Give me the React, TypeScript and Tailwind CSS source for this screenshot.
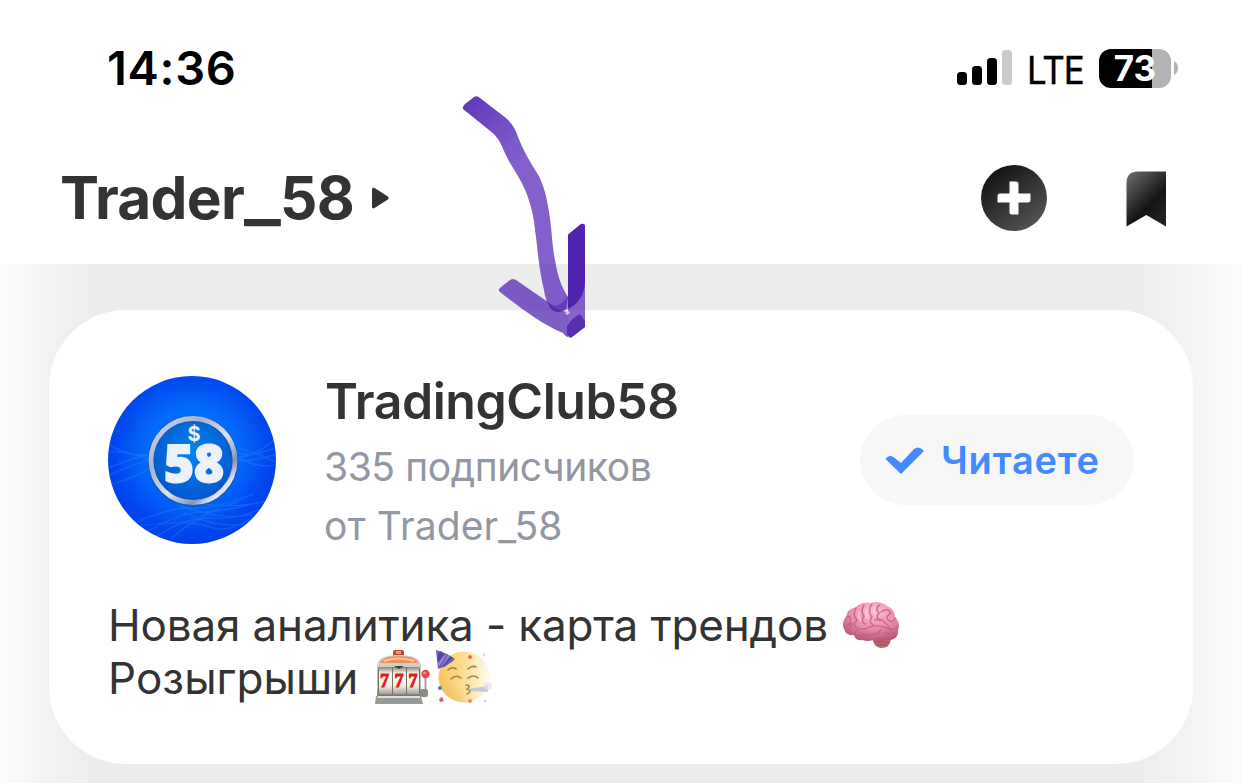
import React from "react";

function StatusBar() {
  return (
    <div className="flex h-[138px] items-center pb-[2px] pl-[107px] pr-[64px]">
      <span className="text-[47px] font-semibold leading-[60px] tracking-[0.7px] text-black">14:36</span>
      <div className="ml-auto flex items-center">
        <svg width="56" height="36" viewBox="0 0 56 36">
          <rect x="0" y="22" width="10" height="13" rx="3.5" />
          <rect x="15" y="16" width="10" height="19" rx="3.5" />
          <rect x="30" y="8" width="10" height="27" rx="3.5" />
          <rect x="45" y="0" width="10" height="35" rx="3.5" fill="#cacaca" />
        </svg>
        <span className="ml-[14px] mt-[3px] w-[72px] origin-left scale-x-[0.92] whitespace-nowrap text-[38px] leading-[48px] tracking-[-1.2px] text-black [-webkit-text-stroke:0.4px_#000]">LTE</span>
        <div className="flex h-[39px] w-[72px] items-center justify-center rounded-[12px] bg-[linear-gradient(90deg,#000_0_53px,#b3b3b3_53px)]">
          <span className="text-[35px] font-bold leading-[39px] text-white">73</span>
        </div>
        <svg className="ml-[3px]" width="4" height="14" viewBox="0 0 4 14">
          <path d="M0 0Q4 2 4 7T0 14Z" fill="#b3b3b3" />
        </svg>
      </div>
    </div>
  );
}

function TitleBar() {
  return (
    <div className="flex h-[120px] items-center pl-[60px] pr-[75px]">
      <h1 className="w-[293px] whitespace-nowrap text-[58.5px] font-bold leading-[72px] tracking-[-0.7px] text-[#333]">
        Trader<span className="inline-block w-[36px] origin-left scale-x-[1.3] font-extrabold">_</span>58
      </h1>
      <svg className="ml-[18px]" width="18" height="22" viewBox="0 0 18 22">
        <path d="M2 2.5Q2 1 3.4 2L16 10Q17.2 11 16 12L3.4 20Q2 21 2 19.5Z" fill="#333" stroke="#333" strokeWidth="2" strokeLinejoin="round" />
      </svg>
      <div className="ml-auto flex items-center gap-[79px]">
        <svg width="66" height="66" viewBox="0 0 66 66">
          <defs>
            <linearGradient id="add" x1="0" y1="0" x2="0.75" y2="1">
              <stop offset="0" stopColor="#080808" />
              <stop offset="1" stopColor="#555" />
            </linearGradient>
          </defs>
          <circle cx="33" cy="33" r="33" fill="url(#add)" />
          <path d="M28.5 16.5H35Q37.5 16.5 37.5 19V28.5H49.5V35Q49.5 37.5 47 37.5H37.5V49.5H31Q28.5 49.5 28.5 47V37.5H16.5V31Q16.5 28.5 19 28.5H28.5Z" fill="#fff" />
        </svg>
        <svg className="mt-[2px]" width="41" height="56" viewBox="0 0 41 56">
          <defs>
            <linearGradient id="mark" x1="0.1" y1="0" x2="0.75" y2="0.9">
              <stop offset="0" stopColor="#6a6a6a" />
              <stop offset="0.7" stopColor="#141414" />
              <stop offset="1" stopColor="#202020" />
            </linearGradient>
          </defs>
          <path d="M0.5 12Q0.5 0.5 12 0.5H40V55.5L20.3 44L0.5 55.5Z" fill="url(#mark)" />
        </svg>
      </div>
    </div>
  );
}

function Avatar() {
  return (
    <svg className="shrink-0" width="168" height="168" viewBox="0 0 168 168">
      <defs>
        <radialGradient id="sky" cx="0.5" cy="0.46" r="0.55">
          <stop offset="0" stopColor="#008cff" />
          <stop offset="0.5" stopColor="#0369fb" />
          <stop offset="0.85" stopColor="#0246ee" />
          <stop offset="1" stopColor="#0240ea" />
        </radialGradient>
        <linearGradient id="rim" x1="0" y1="0" x2="1" y2="1">
          <stop offset="0" stopColor="#d5dcec" />
          <stop offset="0.3" stopColor="#a3b2d2" />
          <stop offset="0.55" stopColor="#dde3ee" />
          <stop offset="0.75" stopColor="#8395ba" />
          <stop offset="0.85" stopColor="#e5e8f2" />
          <stop offset="1" stopColor="#99a9c8" />
        </linearGradient>
        <radialGradient id="disc" cx="0.5" cy="0.4" r="0.6">
          <stop offset="0" stopColor="#0484f3" />
          <stop offset="1" stopColor="#0254cc" />
        </radialGradient>
        <clipPath id="round"><circle cx="84" cy="84" r="84" /></clipPath>
      </defs>
      <g clipPath="url(#round)">
        <rect width="168" height="168" fill="url(#sky)" />
        <g fill="none" stroke="#2ba0ff" strokeWidth="1.2" opacity="0.3">
          <path d="M0 68Q22 82 48 79M0 92Q25 82 50 75M0 109Q24 104 48 89M0 76Q20 74 48 86M0 100Q24 88 46 83" />
          <path d="M124 75Q145 83 168 71M126 82Q150 80 168 62M126 79Q148 93 168 89M130 72Q148 76 168 86M128 85Q150 85 168 78" />
          <path d="M22 149Q64 130 84 132T146 118M35 158Q72 136 94 136T160 124M48 161Q78 140 106 142T160 129M30 150Q82 143 102 151T154 135M60 165Q98 133 130 126M70 129Q110 144 145 139M80 126Q126 134 158 125M75 136Q110 154 144 147" />
        </g>
        <circle cx="85" cy="85" r="42" fill="url(#disc)" />
        <circle cx="85" cy="85" r="42" fill="none" stroke="#20539d" strokeWidth="7" opacity="0.6" />
        <circle cx="85" cy="84.5" r="42" fill="none" stroke="url(#rim)" strokeWidth="4.8" />
        <text x="86" y="65" textAnchor="middle" fontFamily="Inter" fontSize="20" fontWeight="700" fill="#e9f2ff">$</text>
        <text x="86" y="106" textAnchor="middle" fontFamily="Open Sans" fontSize="51" fontWeight="800" textLength="60" lengthAdjust="spacingAndGlyphs" fill="#edf1fb" stroke="#edf1fb" strokeWidth="1.8">58</text>
      </g>
    </svg>
  );
}

function Brain() {
  return (
    <svg width="58" height="48" viewBox="0 0 58 48">
      <defs>
        <radialGradient id="pink" cx="0.55" cy="0.25" r="0.75">
          <stop offset="0" stopColor="#ffbed4" />
          <stop offset="0.55" stopColor="#ed8eaf" />
          <stop offset="1" stopColor="#b95878" />
        </radialGradient>
      </defs>
      <path d="M30 36Q31 46 39 47Q48 47 49 38L46 33Z" fill="#bb6071" />
      <path d="M2 28Q-1 21 4 16Q5 8 14 6Q20 0 29 2Q38-1 45 5Q53 8 53 16Q59 22 56 29Q57 37 49 39Q43 40 36 36Q29 42 20 39Q13 40 12 34Q4 35 2 28Z" fill="url(#pink)" />
      <g fill="none" stroke="#bd617e" strokeWidth="1.4" strokeLinecap="round" opacity="0.85">
        <path d="M13 34Q13 27 23 28Q32 23 42 26Q50 30 55 27M16 36Q20 32 27 34Q35 34 39 29M4 17Q10 12 8 22Q10 25 7 29M14 7Q10 15 15 19Q10 25 15 27M22 4Q18 10 22 15Q18 21 23 23M30 3Q25 10 30 16Q26 21 31 24M38 4Q32 7 37 12Q33 16 38 20M39 11Q46 6 49 12Q43 15 46 19Q51 23 53 17M42 21Q47 24 49 31M4 26Q7 21 11 23M33 19Q38 17 42 20M43 31Q49 36 53 31" />
      </g>
      <path d="M17 11Q16 17 19 20M25 8Q23 14 26 18M33 6Q30 10 34 13" stroke="#ffd5e2" strokeWidth="2" opacity="0.65" fill="none" />
      <path d="M34 41Q41 39 47 42M36 44Q41 42 45 45" stroke="#93404f" opacity="0.55" fill="none" />
    </svg>
  );
}

function SlotMachine() {
  return (
    <svg width="56" height="56" viewBox="0 0 56 56">
      <defs>
        <linearGradient id="metal" x1="0" y1="0" x2="0" y2="1">
          <stop offset="0" stopColor="#d6d6d3" />
          <stop offset="0.8" stopColor="#bcbcba" />
          <stop offset="1" stopColor="#767676" />
        </linearGradient>
        <linearGradient id="reel" x1="0" y1="0" x2="0" y2="1">
          <stop offset="0" stopColor="#898377" />
          <stop offset="0.25" stopColor="#fffdf0" />
          <stop offset="0.7" stopColor="#f2eedf" />
          <stop offset="1" stopColor="#a8a398" />
        </linearGradient>
      </defs>
      <rect x="19" y="1" width="11" height="7" rx="2" fill="#bd4a3e" />
      <rect x="22" y="2" width="5" height="3" fill="#f49877" />
      <path d="M3 17Q3 6 25 6T47 17V47H3Z" fill="url(#metal)" />
      <path d="M6 14Q8 7 25 7T44 14Z" fill="#e8925e" />
      <path d="M10 12Q25 7 40 12" stroke="#ffc592" strokeWidth="2" fill="none" />
      <path d="M2 47H47L49 55H1Z" fill="#999b99" />
      <path d="M4 47H46V49H3Z" fill="#e0e0dd" />
      <rect x="4" y="18" width="42" height="27" rx="2" fill="#77736a" />
      <rect x="5" y="18" width="13" height="27" rx="1" fill="url(#reel)" />
      <rect x="19" y="18" width="13" height="27" rx="1" fill="url(#reel)" />
      <rect x="33" y="18" width="12" height="27" rx="1" fill="url(#reel)" />
      <path d="M20 17L25 20L30 17Z" fill="#493e2b" />
      <g fill="#e01a23" fontFamily="Liberation Serif" fontSize="18" fontWeight="700" stroke="#e01a23" strokeWidth="1">
        <text x="6" y="37.5">7</text>
        <text x="20.5" y="37.5">7</text>
        <text x="34.5" y="37.5">7</text>
      </g>
      <path d="M51.5 25V44H46" fill="none" stroke="#a2a3a1" strokeWidth="2" />
      <rect x="46" y="40" width="8" height="8" rx="2" fill="#8b8c89" />
      <circle cx="51.5" cy="25" r="4.2" fill="#e44b4b" />
      <circle cx="50.5" cy="24" r="1.3" fill="#f99" />
    </svg>
  );
}

function PartyFace() {
  return (
    <svg width="56" height="56" viewBox="0 0 56 56">
      <defs>
        <linearGradient id="face" x1="0" y1="0" x2="1" y2="0">
          <stop offset="0" stopColor="#f6ca5e" />
          <stop offset="0.45" stopColor="#fbdc8c" />
          <stop offset="1" stopColor="#fffaf0" />
        </linearGradient>
        <linearGradient id="glow" x1="0" y1="1" x2="0.8" y2="0">
          <stop offset="0" stopColor="#ea9a30" stopOpacity="0.45" />
          <stop offset="0.4" stopColor="#ea9a30" stopOpacity="0" />
        </linearGradient>
      </defs>
      <circle cx="28" cy="28" r="25.5" fill="url(#face)" />
      <circle cx="28" cy="28" r="25.5" fill="url(#glow)" />
      <path d="M0 1Q11 4 19 10Q12 17 2 20Z" fill="#6c5bb5" />
      <path d="M5 2L1 9L3 18L10 6ZM12 6L6 17L10 17L17 9Z" fill="#9e84cd" />
      <path d="M4 2L9 5L2 14L1 9ZM14 7L17 9L8 18L6 18Z" fill="#4b4ba4" />
      <g fill="none" stroke="#806637" strokeWidth="1.6" strokeLinecap="round" opacity="0.75">
        <path d="M12 21Q16 17 20 20M32 20Q36 16 40 18M15 30Q20 25 25 29M32 29Q38 25 42 29M30 36Q36 36 31 40Q37 42 31 45" />
      </g>
      <path d="M32 40L52 37V43L34 42Z" fill="#a9b7de" opacity="0.7" />
      <circle cx="52" cy="37" r="4" fill="#dfe1ec" opacity="0.7" />
      <circle cx="34" cy="8" r="2" fill="#ec665e" />
      <circle cx="48" cy="6" r="1.5" fill="#efd9b7" />
      <circle cx="4" cy="39" r="2" fill="#4475d7" />
      <path d="M3 50L6 48L8 52L4 53Z" fill="#e25759" />
      <circle cx="34" cy="52" r="2" fill="#eb8a7c" />
      <circle cx="49" cy="52" r="1.3" fill="#cad3ee" />
    </svg>
  );
}

function ChannelCard() {
  return (
    <section className="h-[454px] rounded-[77px] bg-white px-[59px] pt-[66px] text-[#333]">
      <div className="flex h-[168px]">
        <Avatar />
        <div className="ml-[48px] flex-1 whitespace-nowrap">
          <h2 className="-mt-[5px] ml-px text-[50px] font-semibold leading-[60px] tracking-[-0.45px]">TradingClub58</h2>
          <p className="mt-[7px] text-[39px] leading-[58px] tracking-[-0.42px] text-[#9297a1]">335 подписчиков</p>
          <p className="text-[39px] leading-[60px] tracking-[0.1px] text-[#9297a1]">от Trader_58</p>
        </div>
        <button className="mt-[39px] flex h-[90px] w-[274px] items-center rounded-full bg-[#f7f7f7] pl-[25px] text-[#448aff]">
          <svg width="40" height="29" viewBox="0 0 40 29">
            <path d="M0.5 13Q4 8 9 11.5L16 17L29 3Q34-1 39 5L16 28Z" fill="currentColor" />
          </svg>
          <span className="ml-[16px] text-[38px] font-semibold leading-[48px] tracking-[0.8px]">Читаете</span>
        </button>
      </div>
      <div className="mt-[55px] whitespace-nowrap text-[44px] leading-[53px]">
        <p className="flex h-[53px] items-center tracking-[-0.15px]"><span>Новая аналитика - карта трендов</span><span className="-mt-[2px] ml-[14px]"><Brain /></span></p>
        <p className="flex h-[53px] items-center tracking-[0.05px]"><span>Розыгрыши</span><span className="-mt-[3px] ml-[16px]"><SlotMachine /></span><span className="-mt-[3px] ml-[6px]"><PartyFace /></span></p>
      </div>
    </section>
  );
}

function MarkerArrow() {
  return (
    <svg className="pointer-events-none absolute left-[440px] top-[80px]" width="180" height="270" viewBox="0 0 180 270">
      <defs>
        <linearGradient id="ink" gradientUnits="userSpaceOnUse" x1="25" y1="20" x2="85" y2="80">
          <stop offset="0" stopColor="#4a1db2" stopOpacity="0.88" />
          <stop offset="0.75" stopColor="#5526b8" stopOpacity="0.77" />
          <stop offset="1" stopColor="#5f30bd" stopOpacity="0.77" />
        </linearGradient>
      </defs>
      <path d="M23 29Q22 27 25 24L34 17Q37 15 40 18L66 38Q75 46 78 57C83 70 90 82 97 93C104 104 107 119 109 132C112 150 112 165 115 180C118 197 121 206 128 217L126 229Q119 234 112 230Q105 221 104 210C98 184 98 170 95 150C94 136 90 122 86 112C82 102 76 93 70 83C64 72 62 65 58 59Q55 54 49 50Z" fill="url(#ink)" />
      <path d="M60 212Q57 210 61 207L70 200Q73 198 76 200L108 222Q114 230 128 232V257Q126 257 123 253C102 244 82 229 60 212Z" fill="#5224b4" fillOpacity="0.74" />
      <path d="M128 156Q128 154 130 153L141 144Q145 143 145 147V247L132 257Q129 259 128 255Z" fill="#5224b4" fillOpacity="0.7" />
      <path d="M128 156Q128 154 130 153L141 144Q145 143 145 147V203Q143 222 128 229Z" fill="#4012a8" fillOpacity="0.78" />
      <path d="M127 246Q132 238 140 234L145 241V247L132 257Q129 259 127 254Z" fill="#4214a8" fillOpacity="0.68" />
      <path d="M108 222Q118 231 128 216V229Q119 235 112 230Z" fill="#491bac" fillOpacity="0.5" />
      <path d="M125 233L128 230L130 233L127 235Z" fill="#e4daf6" fillOpacity="0.8" />
    </svg>
  );
}

export default function App() {
  return (
    <main className="relative h-[783px] w-[1242px] overflow-hidden bg-white font-['Inter','Noto_Sans',sans-serif]">
      <header className="h-[264px] bg-white">
        <StatusBar />
        <TitleBar />
      </header>
      <div className="h-[519px] bg-[linear-gradient(90deg,#fcfcfc_0,#f8f8f8_24px,#f2f2f2_49px,#ededed_95px,#ededed_1140px,#f4f4f4_1193px,#f8f8f8_1218px,#fcfcfc_1242px)] pl-[49px] pr-[49px] pt-[46px]">
        <ChannelCard />
      </div>
      <MarkerArrow />
    </main>
  );
}
